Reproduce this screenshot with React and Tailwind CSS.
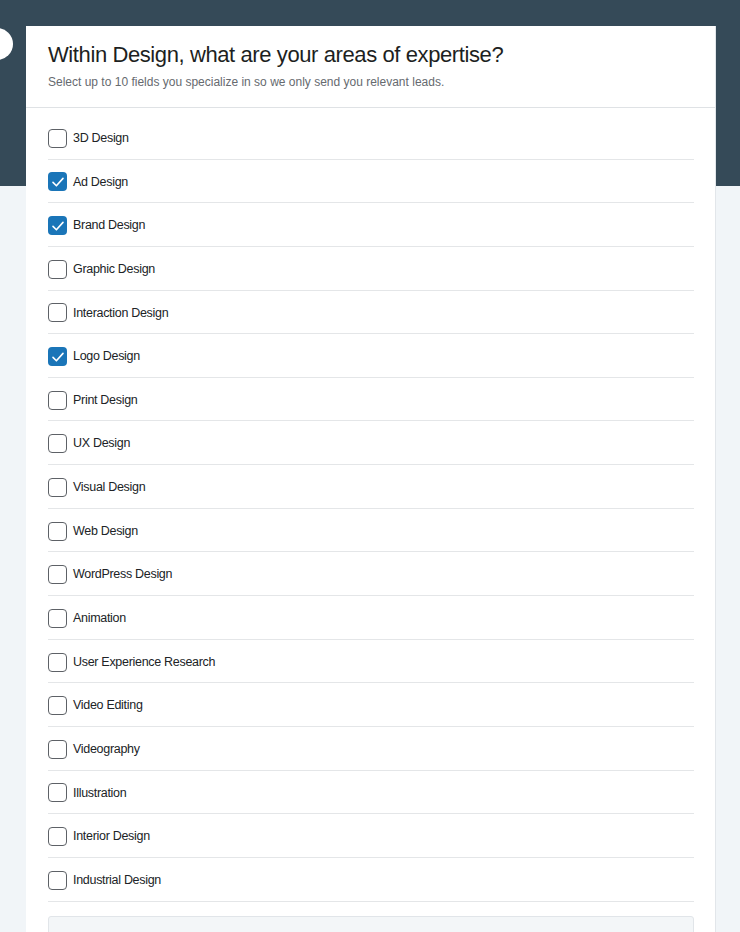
import React from "react";

const items = [
  ["3D Design", false],
  ["Ad Design", true],
  ["Brand Design", true],
  ["Graphic Design", false],
  ["Interaction Design", false],
  ["Logo Design", true],
  ["Print Design", false],
  ["UX Design", false],
  ["Visual Design", false],
  ["Web Design", false],
  ["WordPress Design", false],
  ["Animation", false],
  ["User Experience Research", false],
  ["Video Editing", false],
  ["Videography", false],
  ["Illustration", false],
  ["Interior Design", false],
  ["Industrial Design", false],
];

function Box({ checked }) {
  if (checked) {
    return (
      <span className="flex h-[19px] w-[19px] shrink-0 items-center justify-center rounded-[4px] bg-[#1a75b8]">
        <svg width="14" height="14" viewBox="0 0 14 14" fill="none">
          <path d="M2 7.4 L5.4 10.8 L12 3.4" stroke="white" strokeWidth="1.6" strokeLinecap="round" strokeLinejoin="round" />
        </svg>
      </span>
    );
  }
  return <span className="h-[19px] w-[19px] shrink-0 rounded-[4px] border-[1.5px] border-[#5d6166] bg-white" />;
}

export default function App() {
  return (
    <div className="relative min-h-[932px] overflow-hidden bg-[#f1f5f8] font-['Liberation_Sans',Arial,sans-serif]">
      <div className="absolute left-0 right-0 top-0 h-[186px] bg-[#354a58]" />
      <div className="absolute left-[-19px] top-[28px] h-[32px] w-[32px] rounded-full bg-white" />
      <div className="relative pl-[26px] pr-[24px] pt-[26px]">
        <div className="border-r border-[#e2e6ea] bg-white">
          <div className="border-b border-[#dfe2e5] px-[22px] pb-[17px] pt-[16px]">
            <h1 className="text-[22px] leading-[26px] tracking-[-0.4px] text-[#1d1f22]">
              Within Design, what are your areas of expertise?
            </h1>
            <p className="mt-[6px] text-[12px] leading-[16px] text-[#666a6f]">
              Select up to 10 fields you specialize in so we only send you relevant leads.
            </p>
          </div>
          <div className="pl-[22px] pr-[21px] pt-[8px]">
            {items.map(([label, checked]) => (
              <div key={label} className="flex h-[43.65px] items-center gap-[6px] border-b border-[#e4e6e8] pt-[2px]">
                <Box checked={checked} />
                <span className="text-[12.5px] tracking-[-0.3px] text-[#202326]">{label}</span>
              </div>
            ))}
            <div className="mt-[14px] h-[60px] rounded-[3px] border border-[#e1e5e9] bg-[#f3f6f8]" />
          </div>
        </div>
      </div>
    </div>
  );
}
